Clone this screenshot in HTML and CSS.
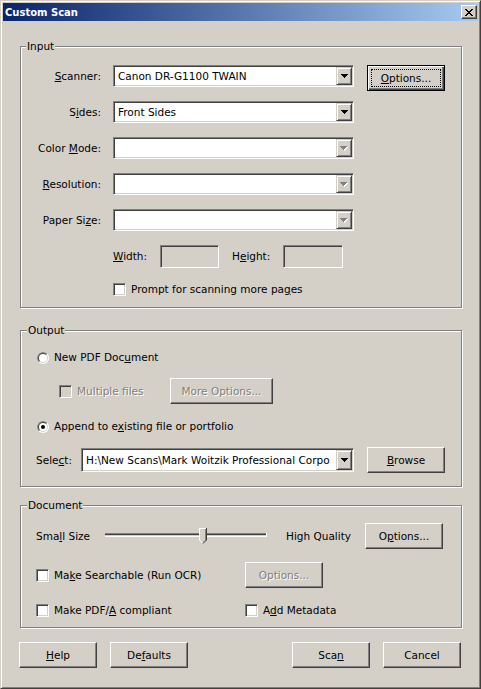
FILE: index.html
```html
<!DOCTYPE html>
<html>
<head>
<meta charset="utf-8">
<title>Custom Scan</title>
<link rel="stylesheet" href="styles.css">
</head>
<body>
<div class="window">
  <div class="titlebar">
    <span class="title">Custom Scan</span>
    <span class="close">
      <svg width="8" height="7" viewBox="0 0 8 7" shape-rendering="crispEdges"><path d="M0 0h2v1H0zM6 0h2v1H6zM1 1h2v1H1zM5 1h2v1H5zM2 2h4v1H2zM3 3h2v1H3zM2 4h4v1H2zM1 5h2v1H1zM5 5h2v1H5zM0 6h2v1H0zM6 6h2v1H6z" fill="#000"/></svg>
    </span>
  </div>
  <div class="content">
    <div class="group g-input">
      <div class="gtitle">Input</div>
      <div class="rows">
        <div class="frow">
          <span class="flabel"><u>S</u>canner:</span>
          <div class="combo c-main"><span class="combo-text">Canon DR-G1100 TWAIN</span><span class="drop"><svg class="arrow" width="7" height="4" viewBox="0 0 7 4" shape-rendering="crispEdges"><path d="M0 0h7v1H0zM1 1h5v1H1zM2 2h3v1H2zM3 3h1v1H3z" fill="#000"/></svg></span></div>
          <button class="btn btn-default btn-top"><span><u>O</u>ptions...</span></button>
        </div>
        <div class="frow">
          <span class="flabel">S<u>i</u>des:</span>
          <div class="combo c-main"><span class="combo-text">Front Sides</span><span class="drop"><svg class="arrow" width="7" height="4" viewBox="0 0 7 4" shape-rendering="crispEdges"><path d="M0 0h7v1H0zM1 1h5v1H1zM2 2h3v1H2zM3 3h1v1H3z" fill="#000"/></svg></span></div>
        </div>
        <div class="frow">
          <span class="flabel">Color <u>M</u>ode:</span>
          <div class="combo c-main"><span class="combo-text"></span><span class="drop"><svg class="arrow" width="8" height="5" viewBox="0 0 8 5" shape-rendering="crispEdges"><path d="M1 1h7v1H1zM2 2h5v1H2zM3 3h3v1H3zM4 4h1v1H4z" fill="#fff"/><path d="M0 0h7v1H0zM1 1h5v1H1zM2 2h3v1H2zM3 3h1v1H3z" fill="#808080"/></svg></span></div>
        </div>
        <div class="frow">
          <span class="flabel"><u>R</u>esolution:</span>
          <div class="combo c-main"><span class="combo-text"></span><span class="drop"><svg class="arrow" width="8" height="5" viewBox="0 0 8 5" shape-rendering="crispEdges"><path d="M1 1h7v1H1zM2 2h5v1H2zM3 3h3v1H3zM4 4h1v1H4z" fill="#fff"/><path d="M0 0h7v1H0zM1 1h5v1H1zM2 2h3v1H2zM3 3h1v1H3z" fill="#808080"/></svg></span></div>
        </div>
        <div class="frow">
          <span class="flabel">Paper Si<u>z</u>e:</span>
          <div class="combo c-main"><span class="combo-text"></span><span class="drop"><svg class="arrow" width="8" height="5" viewBox="0 0 8 5" shape-rendering="crispEdges"><path d="M1 1h7v1H1zM2 2h5v1H2zM3 3h3v1H3zM4 4h1v1H4z" fill="#fff"/><path d="M0 0h7v1H0zM1 1h5v1H1zM2 2h3v1H2zM3 3h1v1H3z" fill="#808080"/></svg></span></div>
        </div>
      </div>
      <div class="dims">
        <span class="dlabel-w"><u>W</u>idth:</span>
        <span class="edit e-w"></span>
        <span class="dlabel-h">H<u>e</u>ight:</span>
        <span class="edit e-h"></span>
      </div>
      <div class="crow c-prompt">
        <span class="check"></span>
        <span class="ctext">Prompt for scanning more pa<u>g</u>es</span>
      </div>
    </div>

    <div class="group g-output">
      <div class="gtitle">Output</div>
      <div class="crow o-first">
        <svg class="radio" width="12" height="12" viewBox="0 0 12 12"><circle cx="6" cy="6" r="6" fill="#fff"/><path d="M1.757 10.243A6 6 0 0 1 10.243 1.757Z" fill="#808080"/><circle cx="6" cy="6" r="5" fill="#d4d0c8"/><path d="M2.464 9.536A5 5 0 0 1 9.536 2.464Z" fill="#404040"/><circle cx="6" cy="6" r="4" fill="#fff"/></svg>
        <span class="ctext">New PDF Doc<u>u</u>ment</span>
      </div>
      <div class="mrow">
        <span class="mcheck"><span class="check check-dis"></span><span class="ctext dis">Multiple files</span></span>
        <button class="btn btn-dis btn-more">More Options...</button>
      </div>
      <div class="crow o-append">
        <svg class="radio" width="12" height="12" viewBox="0 0 12 12"><circle cx="6" cy="6" r="6" fill="#fff"/><path d="M1.757 10.243A6 6 0 0 1 10.243 1.757Z" fill="#808080"/><circle cx="6" cy="6" r="5" fill="#d4d0c8"/><path d="M2.464 9.536A5 5 0 0 1 9.536 2.464Z" fill="#404040"/><circle cx="6" cy="6" r="4" fill="#fff"/><circle cx="6" cy="6" r="2" fill="#000"/></svg>
        <span class="ctext">Append to e<u>x</u>isting file or portfolio</span>
      </div>
      <div class="srow">
        <span class="slabel">Sele<u>c</u>t:</span>
        <div class="combo c-select"><span class="combo-text">H:\New Scans\Mark Woitzik Professional Corpo</span><span class="drop"><svg class="arrow" width="7" height="4" viewBox="0 0 7 4" shape-rendering="crispEdges"><path d="M0 0h7v1H0zM1 1h5v1H1zM2 2h3v1H2zM3 3h1v1H3z" fill="#000"/></svg></span></div>
        <button class="btn btn-browse"><span><u>B</u>rowse</span></button>
      </div>
    </div>

    <div class="group g-doc">
      <div class="gtitle">Document</div>
      <div class="qrow">
        <span class="qlabel">Sma<u>l</u>l Size</span>
        <svg class="slider" width="162" height="17" viewBox="0 0 162 17" shape-rendering="crispEdges">
          <rect x="0" y="5" width="162" height="1" fill="#808080"/>
          <rect x="0" y="6" width="162" height="1" fill="#404040"/>
          <rect x="0" y="7" width="162" height="1" fill="#d4d0c8"/>
          <rect x="0" y="8" width="162" height="1" fill="#fff"/>
          <rect x="161" y="5" width="1" height="4" fill="#fff"/>
          <g transform="translate(94 0)">
            <polygon points="0,0 8,0 8,12 4,16 0,12" fill="#d4d0c8" shape-rendering="auto"/>
            <rect x="0" y="0" width="7" height="1" fill="#fff"/>
            <rect x="0" y="0" width="1" height="12" fill="#fff"/>
            <rect x="7" y="0" width="1" height="12" fill="#404040"/>
            <rect x="6" y="1" width="1" height="11" fill="#808080"/>
            <path d="M7.5 12 L4 15.6" stroke="#404040" stroke-width="1" fill="none" shape-rendering="auto"/>
            <path d="M6.5 12 L4 14.5" stroke="#808080" stroke-width="1" fill="none" shape-rendering="auto"/>
            <path d="M0.5 12 L3.6 15.2" stroke="#fff" stroke-width="1" fill="none" shape-rendering="auto"/>
          </g>
        </svg>
        <span class="hqlabel">High Quality</span>
        <button class="btn"><span>O<u>p</u>tions...</span></button>
      </div>
      <div class="drow d-search">
        <span class="dcheck"><span class="check"></span><span class="ctext">Ma<u>k</u>e Searchable (Run OCR)</span></span>
        <button class="btn btn-dis">Options...</button>
      </div>
      <div class="drow d-pdfa">
        <span class="dcheck"><span class="check"></span><span class="ctext">Make PDF/<u>A</u> compliant</span></span>
        <span class="dcheck2"><span class="check"></span><span class="ctext">A<u>d</u>d Metadata</span></span>
      </div>
    </div>

    <div class="brow">
      <button class="btn"><span><u>H</u>elp</span></button>
      <button class="btn btn-gap"><span>De<u>f</u>aults</span></button>
      <span class="spacer"></span>
      <button class="btn"><span>Sca<u>n</u></span></button>
      <button class="btn btn-gap"><span>Cancel</span></button>
    </div>
  </div>
</div>
</body>
</html>
```

FILE: styles.css
```css
* {
  box-sizing: border-box;
}

html, body {
  margin: 0;
  padding: 0;
}

body {
  width: 481px;
  height: 689px;
  overflow: hidden;
  background: #d4d0c8;
  font-family: "DejaVu Sans", Verdana, sans-serif;
  font-size: 10.5px;
  line-height: 13px;
  color: #000;
}

u {
  text-decoration: underline;
  text-underline-offset: 1px;
}

.window {
  width: 481px;
  height: 689px;
  border: 1px solid;
  border-color: #d4d0c8 #404040 #404040 #d4d0c8;
  box-shadow: inset 1px 1px 0 #fff, inset -1px -1px 0 #808080;
  padding: 2px;
}

.titlebar {
  height: 18px;
  display: flex;
  align-items: center;
  justify-content: space-between;
  padding: 0 1px 0 2px;
  background: linear-gradient(to right, #0a246a, #a6caf0);
}

.title {
  color: #fff;
  font-weight: bold;
  font-size: 10px;
}

.close {
  width: 16px;
  height: 14px;
  display: flex;
  align-items: center;
  justify-content: center;
  background: #d4d0c8;
  border: 1px solid;
  border-color: #fff #404040 #404040 #fff;
  box-shadow: inset -1px -1px 0 #808080;
}

.content {
  padding: 0 16px 0 17px;
}

.group {
  border: 1px solid #808080;
  box-shadow: inset 1px 1px 0 #fff, 1px 1px 0 #fff;
}

.gtitle {
  width: fit-content;
  margin: -7px 0 0 5px;
  padding: 0 1px;
  background: #d4d0c8;
}

.g-output .gtitle,
.g-doc .gtitle {
  margin-left: -9px;
}

/* Input group */
.g-input {
  margin-top: 25px;
  padding-bottom: 11px;
}

.rows {
  margin-top: 12px;
}

.frow {
  display: flex;
  align-items: center;
  height: 22px;
  margin-bottom: 14px;
}

.flabel {
  width: 80px;
  text-align: right;
  margin-right: 12px;
  white-space: nowrap;
}

.combo {
  display: flex;
  align-items: center;
  height: 22px;
  border: 1px solid;
  border-color: #808080 #fff #fff #808080;
  box-shadow: inset 1px 1px 0 #404040, inset -1px -1px 0 #d4d0c8;
  background: #fff;
  padding: 1px;
}

.c-main {
  width: 241px;
}

.c-select {
  width: 273px;
  height: 24px;
}

.combo-text {
  flex: 1;
  min-width: 0;
  padding-left: 3px;
  overflow: hidden;
  white-space: nowrap;
}

.drop {
  flex: none;
  width: 16px;
  height: 100%;
  display: flex;
  align-items: center;
  justify-content: center;
  background: #d4d0c8;
  border: 1px solid;
  border-color: #d4d0c8 #404040 #404040 #d4d0c8;
  box-shadow: inset 1px 1px 0 #fff, inset -1px -1px 0 #808080;
}

.arrow {
  display: block;
}

.btn {
  flex: none;
  width: 78px;
  height: 26px;
  padding: 0;
  margin: 0;
  font: inherit;
  color: #000;
  background: #d4d0c8;
  border: 1px solid;
  border-color: #fff #404040 #404040 #fff;
  box-shadow: inset -1px -1px 0 #808080;
  display: flex;
  align-items: center;
  justify-content: center;
  white-space: nowrap;
}

.btn-default {
  border: 1px solid #000;
  box-shadow: inset 1px 1px 0 #fff, inset -1px -1px 0 #404040, inset -2px -2px 0 #808080;
  outline: 1px dotted #000;
  outline-offset: -5px;
}

.btn-top {
  align-self: flex-start;
  margin-left: 13px;
}

.btn-dis,
.dis {
  color: #808080;
  text-shadow: 1px 1px 0 #fff;
}

.dims {
  display: flex;
  align-items: center;
  height: 23px;
  padding-left: 92px;
  margin-bottom: 15px;
}

.dlabel-w {
  width: 47px;
}

.dlabel-h {
  width: 51px;
  margin-left: 13px;
}

.edit {
  height: 23px;
  border: 1px solid;
  border-color: #808080 #fff #fff #808080;
  box-shadow: inset 1px 1px 0 #404040, inset -1px -1px 0 #d4d0c8;
  background: #d4d0c8;
}

.e-w {
  width: 59px;
}

.e-h {
  width: 60px;
}

.crow {
  display: flex;
  align-items: center;
  height: 13px;
}

.c-prompt {
  padding-left: 92px;
}

.check {
  flex: none;
  width: 13px;
  height: 13px;
  border: 1px solid;
  border-color: #808080 #fff #fff #808080;
  box-shadow: inset 1px 1px 0 #404040, inset -1px -1px 0 #d4d0c8;
  background: #fff;
}

.check-dis {
  background: #d4d0c8;
}

.ctext {
  margin-left: 5px;
  white-space: nowrap;
}

.radio {
  flex: none;
  display: block;
  margin-left: 1px;
}

/* Output group */
.g-output {
  margin-top: 22px;
  padding: 0 0 13px 15px;
}

.o-first {
  margin-top: 14px;
}

.mrow {
  display: flex;
  align-items: center;
  height: 26px;
  margin-top: 14px;
  padding-left: 23px;
}

.mcheck {
  display: flex;
  align-items: center;
  width: 111px;
}

.btn-more {
  width: 103px;
}

.o-append {
  margin-top: 16px;
}

.srow {
  display: flex;
  align-items: center;
  height: 26px;
  margin-top: 14px;
}

.slabel {
  width: 45px;
}

.btn-browse {
  margin-left: 13px;
}

/* Document group */
.g-doc {
  margin-top: 18px;
  padding: 0 0 10px 15px;
}

.qrow {
  display: flex;
  align-items: center;
  height: 26px;
  margin-top: 11px;
}

.qlabel {
  width: 69px;
}

.slider {
  display: block;
  flex: none;
}

.hqlabel {
  width: 79px;
  margin-left: 19px;
}

.drow {
  display: flex;
  align-items: center;
}

.d-search {
  height: 26px;
  margin-top: 13px;
}

.d-pdfa {
  height: 13px;
  margin-top: 16px;
}

.dcheck {
  display: flex;
  align-items: center;
  width: 209px;
}

.dcheck2 {
  display: flex;
  align-items: center;
}

/* Bottom buttons */
.brow {
  display: flex;
  margin: 14px 1px 0 -1px;
}

.btn-gap {
  margin-left: 13px;
}

.spacer {
  flex: 1;
}
```
